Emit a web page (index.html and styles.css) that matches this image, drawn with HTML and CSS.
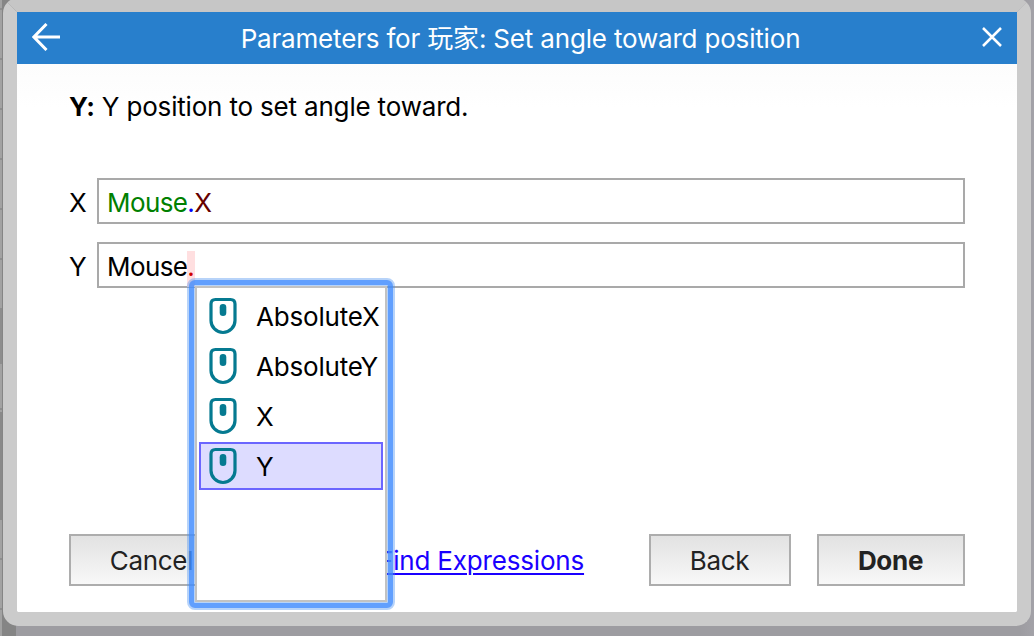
FILE: index.html
```html
<!DOCTYPE html>
<html lang="en">
<head>
<meta charset="utf-8">
<title>Parameters</title>
<link rel="stylesheet" href="styles.css">
</head>
<body>
<svg class="symbols" width="0" height="0" aria-hidden="true">
  <symbol id="mouse" viewBox="0 0 28 38">
    <path d="M6.500 2.500h15q4.500 0 4.500 4.500v16.500a12 12 0 0 1-24 0V7Q2 2.500 6.500 2.500z" fill="none" stroke="#057a91" stroke-width="3.200"/>
    <rect x="10.700" y="7" width="6.600" height="12" rx="3.300" ry="3.300" fill="#057a91"/>
  </symbol>
</svg>
<div class="backdrop"></div>
<main class="dialog">
  <header class="titlebar">
    <svg class="back-arrow" viewBox="0 0 28 28"><path d="M14.500 1 1.900 14l12.600 13M2 14h26" fill="none" stroke="#fff" stroke-width="3"/></svg>
    <h1 class="title">Parameters for <span class="cjk">玩家</span>: Set angle toward position</h1>
    <svg class="close" viewBox="0 0 20 20"><path d="M1 1l18 18M19 1 1 19" fill="none" stroke="#fff" stroke-width="2.500"/></svg>
  </header>
  <div class="content">
    <p class="description"><b>Y:</b> Y position to set angle toward.</p>
    <div class="row"><label class="label">X</label><div class="field"><span class="object">Mouse</span><span class="dot">.</span><span class="member">X</span></div></div>
    <div class="row"><label class="label">Y</label><div class="field"><span class="plain">Mouse</span><span class="error">.</span></div></div>
    <footer class="footer">
      <button class="button cancel">Cancel</button>
      <a class="link">Find Expressions</a>
      <button class="button back">Back</button>
      <button class="button done">Done</button>
    </footer>
  </div>
</main>
<ul class="popup">
  <li class="option"><svg class="mouse"><use href="#mouse"/></svg><span>AbsoluteX</span></li>
  <li class="option"><svg class="mouse"><use href="#mouse"/></svg><span>AbsoluteY</span></li>
  <li class="option"><svg class="mouse"><use href="#mouse"/></svg><span>X</span></li>
  <li class="option selected"><svg class="mouse"><use href="#mouse"/></svg><span>Y</span></li>
</ul>
</body>
</html>
```
FILE: styles.css
```css
* { box-sizing: border-box; }
body {
  margin: 0;
  width: 1034px;
  height: 636px;
  overflow: hidden;
  position: relative;
  background: linear-gradient(90deg, #858585 0 16px, #9d9ca1 16px 1020px, #a3a2a8);
  font-family: Inter, "Noto Sans CJK SC", sans-serif;
  font-size: 26px;
  letter-spacing: -0.18px;
  line-height: 32px;
  color: #000;
}
.symbols { position: absolute; }
.backdrop {
  position: absolute;
  left: 0;
  top: 0;
  width: 2px;
  height: 636px;
  background:
    linear-gradient(transparent 308px, #8d8d8d 308px 364px, transparent 364px 412px, #898989 412px 520px, transparent 520px),
    repeating-linear-gradient(#a2a2a2 0 8px, #8e8e8e 8px 10px, #a2a2a2 10px 50px);
}
.dialog {
  position: relative;
  width: 1028px;
  height: 628px;
  margin: -2px 0 0 3px;
  border: 14px solid;
  border-color: #c6c6c6 #cbcbcb #cbcbcb;
  border-radius: 15px;
  background: #fff;
  background-clip: padding-box;
}
.titlebar {
  display: flex;
  align-items: center;
  justify-content: space-between;
  height: 52px;
  padding: 0 15px;
  background: #287fcc;
  color: #fff;
}
.back-arrow { width: 28px; height: 28px; margin-top: -2px; }
.close { width: 20px; height: 20px; margin-top: -2px; }
.title { margin: 2px 0 0 -1px; font-size: 26px; font-weight: 400; white-space: nowrap; }
.cjk { font-family: "Noto Sans CJK SC", sans-serif; line-height: 1; }
.content { padding: 27px 52px 0; background: linear-gradient(#fcfcfc, #fff 44px); }
.description { margin: 0 0 55px; }
.row { display: flex; align-items: center; height: 46px; margin-bottom: 18px; }
.label { width: 28px; padding-top: 4px; }
.field { flex: 1; height: 46px; padding: 7px 8px; border: 2px solid #a9a9a9; background: #fff; white-space: nowrap; letter-spacing: -0.6px; }
.object { color: #008000; }
.dot { color: #00f; }
.member { color: #600; }
.error { display: inline-block; width: 8px; height: 36px; color: #d00000; background: #ffdfe0; }
.footer { display: flex; align-items: center; margin-top: 246px; }
.button {
  height: 52px;
  padding: 2px 0 0;
  border: 2px solid #adadad;
  background: linear-gradient(#e2e2e2, #f8f8f8);
  color: #222;
  font: 26px/32px Inter, sans-serif;
  letter-spacing: -0.3px;
}
.cancel { width: 164px; padding-left: 1px; }
.link {
  margin: 1px 0 0 145px;
  color: #1a00ff;
  text-decoration: underline;
  text-decoration-thickness: 2px;
  text-underline-offset: 3px;
  white-space: nowrap;
}
.back { width: 142px; margin-left: auto; padding-right: 1px; }
.done { width: 148px; margin-left: 26px; padding-right: 1px; font-weight: 700; }
.popup {
  position: absolute;
  left: 195px;
  top: 286px;
  width: 192px;
  height: 316px;
  margin: 0;
  padding: 4px 2px 0;
  list-style: none;
  border: 2px solid #c2c2c2;
  background: #fff;
}
/* Two translucent layers make the soft-edged focus ring. */
.popup::before,
.popup::after {
  content: "";
  position: absolute;
  pointer-events: none;
}
.popup::before {
  inset: -10px;
  border: 8px solid rgba(74, 144, 240, 0.4);
  border-radius: 8px;
}
.popup::after {
  inset: -8px;
  border: 5px solid rgba(65, 140, 255, 0.73);
  border-radius: 6px;
}
.option { display: flex; align-items: center; height: 48px; margin-bottom: 2px; padding: 0 8px; border: 2px solid transparent; white-space: nowrap; }
.selected { border-color: #6b66ff; background: #dddcff; }
.mouse { flex: none; width: 28px; height: 38px; margin-right: 19px; }
.option span { padding-top: 2px; }
```
